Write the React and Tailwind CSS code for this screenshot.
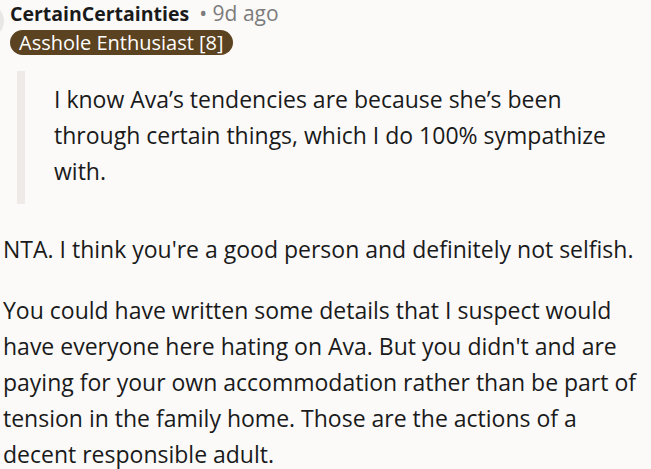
export default function App() {
  return (
    <div className="w-[651px] h-[469px] overflow-hidden bg-[#fbfaf9] text-[#1a1a1b] font-['Open_Sans',sans-serif] relative">
      {/* avatar edge */}
      <div className="absolute -left-[30px] top-[4px] w-[34px] h-[34px] rounded-full bg-[#e9e7e6]" />
      <div className="pl-[10px]">
        <div className="flex items-baseline gap-[10px] leading-[27px]">
          <span className="text-[19.5px] font-bold text-[#1a1a1b]">CertainCertainties</span>
          <span className="text-[21px] text-[#7c7c7c]">• 9d ago</span>
        </div>
        <div className="mt-[3px] inline-flex items-center h-[25px] px-[9px] rounded-full bg-[#5b4220] text-white text-[20px] leading-none">
          Asshole Enthusiast [8]
        </div>
      </div>
      <div className="ml-[17px] mt-[15px] border-l-[8px] border-[#efe9e7] pl-[29px] py-[10px] h-[133px] text-[23px] leading-[36px] pr-[20px]">
        I know Ava’s tendencies are because she’s been through certain things, which I do 100% sympathize with.
      </div>
      <div className="px-[3px] mt-[27px] text-[23px] leading-[36px]">
        <p>NTA. I think you're a good person and definitely not selfish.</p>
        <p className="mt-[25px]">
          You could have written some details that I suspect would have everyone here hating on Ava. But you didn't and are paying for your own accommodation rather than be part of tension in the family home. Those are the actions of a decent responsible adult.
        </p>
      </div>
    </div>
  );
}
